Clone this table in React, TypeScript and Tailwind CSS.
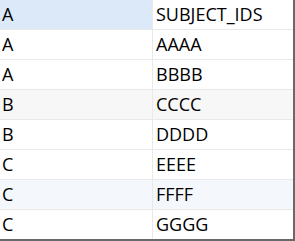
import React from 'react';

const rows = [
    { a: 'A', b: 'SUBJECT_IDS', bgA: 'bg-[#dbe9f8]', bgB: 'bg-white' },
    { a: 'A', b: 'AAAA', bgA: 'bg-white', bgB: 'bg-white' },
    { a: 'A', b: 'BBBB', bgA: 'bg-white', bgB: 'bg-white' },
    { a: 'B', b: 'CCCC', bgA: 'bg-[#f7f7f7]', bgB: 'bg-[#f7f7f7]' },
    { a: 'B', b: 'DDDD', bgA: 'bg-white', bgB: 'bg-white' },
    { a: 'C', b: 'EEEE', bgA: 'bg-white', bgB: 'bg-white' },
    { a: 'C', b: 'FFFF', bgA: 'bg-[#f4f8fc]', bgB: 'bg-[#f4f8fc]' },
    { a: 'C', b: 'GGGG', bgA: 'bg-white', bgB: 'bg-white' },
];

const App: React.FC = () => {
    return (
        <div className="w-[295px] h-[241px] bg-white border-r-2 border-b-2 border-[#696969] overflow-hidden font-['Open_Sans',sans-serif] text-[18px] text-black">
            {rows.map((row, i) => (
                <div key={i} className="grid grid-cols-[153px_1fr] h-[30px] border-b border-[#e9e9e9]">
                    <div className={`${row.bgA} border-r border-[#e9e9e9] pl-[2px] flex items-center`}>{row.a}</div>
                    <div className={`${row.bgB} pl-[3px] flex items-center`}>{row.b}</div>
                </div>
            ))}
        </div>
    );
};

export default App;
